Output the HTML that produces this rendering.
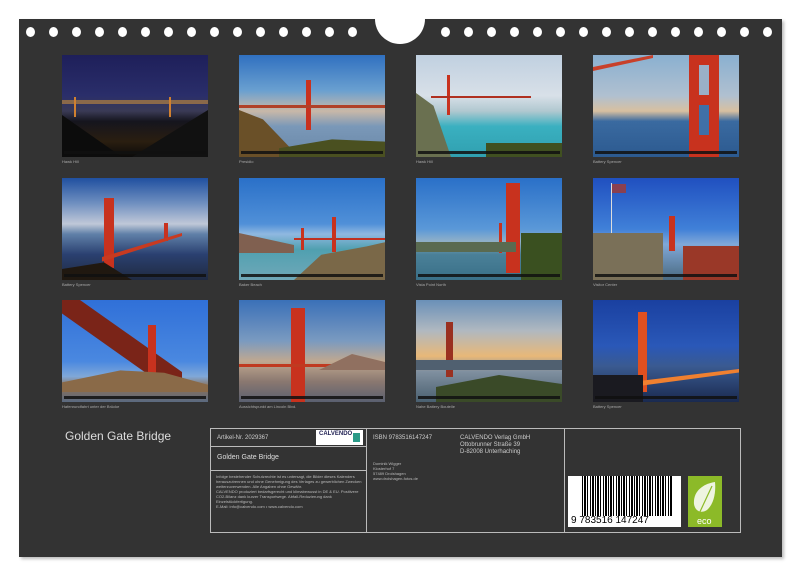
<!DOCTYPE html>
<html><head><meta charset="utf-8"><style>
*{margin:0;padding:0;box-sizing:border-box}
body{width:800px;height:577px;background:#fff;position:relative;overflow:hidden;font-family:"Liberation Sans",sans-serif}
#panel{position:absolute;left:19px;top:19px;width:763px;height:538px;background:#333;box-shadow:2px 2px 3px #bbb}
.hole{position:absolute;top:27px;width:9px;height:10px;border-radius:50%;background:#fff}
#notch{position:absolute;left:375px;top:14px;width:50px;height:30px;border-radius:0 0 25px 25px;background:#fff}
.ph{position:absolute;width:146px;height:102px;overflow:hidden}
.ph .strip{position:absolute;left:2px;right:2px;bottom:3px;height:3px;background:#111;opacity:.85}
.ph div{position:absolute}
.cap{position:absolute;font-size:4px;color:#aaa}
.t{background:#c8321e}
.box{position:absolute;border:1px solid #bbb}
.sm{font-size:4px;color:#bbb;line-height:5px;position:absolute}
</style></head><body>
<div id="panel"></div>
<div id="notch"></div>
<div class="hole" style="left:26px"></div><div class="hole" style="left:49px"></div><div class="hole" style="left:72px"></div><div class="hole" style="left:95px"></div><div class="hole" style="left:118px"></div><div class="hole" style="left:141px"></div><div class="hole" style="left:164px"></div><div class="hole" style="left:187px"></div><div class="hole" style="left:210px"></div><div class="hole" style="left:233px"></div><div class="hole" style="left:256px"></div><div class="hole" style="left:279px"></div><div class="hole" style="left:302px"></div><div class="hole" style="left:325px"></div><div class="hole" style="left:348px"></div>
<div class="hole" style="left:441px"></div><div class="hole" style="left:464px"></div><div class="hole" style="left:487px"></div><div class="hole" style="left:510px"></div><div class="hole" style="left:533px"></div><div class="hole" style="left:556px"></div><div class="hole" style="left:579px"></div><div class="hole" style="left:602px"></div><div class="hole" style="left:625px"></div><div class="hole" style="left:648px"></div><div class="hole" style="left:671px"></div><div class="hole" style="left:694px"></div><div class="hole" style="left:717px"></div><div class="hole" style="left:740px"></div><div class="hole" style="left:763px"></div>

<div class="ph" style="left:62px;top:55px;background:linear-gradient(#1e1f5a 0%,#2a2e6a 40%,#3a3a55 55%,#15151e 65%,#2a1e10 85%,#0a0a0a 100%)">
<div style="left:0;top:45px;width:146px;height:4px;background:#b08040;opacity:.7"></div>
<div style="left:12px;top:42px;width:2px;height:20px;background:#d08030"></div>
<div style="left:107px;top:42px;width:2px;height:20px;background:#d08030"></div>
<div style="left:0;top:60px;width:60px;height:42px;background:#0c0c0c;clip-path:polygon(0 0,100% 100%,0 100%)"></div>
<div style="left:70px;top:55px;width:76px;height:47px;background:#111;clip-path:polygon(100% 0,100% 100%,0 100%)"></div>
<div class="strip"></div></div>
<div class="cap" style="left:62px;top:159px">Hawk Hill</div>

<div class="ph" style="left:239px;top:55px;background:linear-gradient(#3070c0 0%,#6aa0d0 35%,#c8b8a8 55%,#7a98b8 70%,#6a88a8 100%)">
<div class="t" style="left:67px;top:25px;width:5px;height:50px"></div>
<div style="left:0;top:50px;width:146px;height:3px;background:#b04028"></div>
<div style="left:0;top:55px;width:60px;height:47px;background:#6a5028;clip-path:polygon(0 0,40% 20%,100% 100%,0 100%)"></div>
<div style="left:40px;top:80px;width:106px;height:22px;background:#4a5020;clip-path:polygon(0 60%,50% 20%,100% 30%,100% 100%,0 100%)"></div>
<div class="strip"></div></div>
<div class="cap" style="left:239px;top:159px">Presidio</div>

<div class="ph" style="left:416px;top:55px;background:linear-gradient(#c0d0e0 0%,#d8e0e8 40%,#b0c8d0 55%,#3ab0c0 70%,#30a0b0 100%)">
<div class="t" style="left:31px;top:20px;width:3px;height:40px"></div>
<div style="left:15px;top:41px;width:100px;height:2px;background:#b03020"></div>
<div style="left:0;top:38px;width:35px;height:64px;background:#6a7050;clip-path:polygon(0 0,50% 20%,100% 100%,0 100%)"></div>
<div style="left:70px;top:88px;width:76px;height:14px;background:#405020"></div>
<div class="strip"></div></div>
<div class="cap" style="left:416px;top:159px">Hawk Hill</div>

<div class="ph" style="left:593px;top:55px;background:linear-gradient(#8ab0d0 0%,#b0c0d0 40%,#d8c0a0 55%,#3a6aa0 65%,#2c5a90 100%)">
<div class="t" style="left:96px;top:0;width:30px;height:102px"></div>
<div style="left:106px;top:10px;width:10px;height:30px;background:#9ab0c8"></div>
<div style="left:106px;top:50px;width:10px;height:30px;background:#4070a8"></div>
<div style="left:0;top:0;width:60px;height:20px;background:#c8402a;clip-path:polygon(0 60%,100% 0,100% 15%,0 80%)"></div>
<div class="strip"></div></div>
<div class="cap" style="left:593px;top:159px">Battery Spencer</div>

<div class="ph" style="left:62px;top:178px;background:linear-gradient(#2050a0 0%,#7090c0 25%,#c0c8d8 45%,#6080a8 55%,#2a4070 75%,#202a40 100%)">
<div class="t" style="left:42px;top:20px;width:10px;height:70px"></div>
<div class="t" style="left:102px;top:45px;width:4px;height:18px"></div>
<div style="left:40px;top:55px;width:80px;height:30px;background:#c83a20;clip-path:polygon(0 80%,100% 0,100% 10%,0 95%)"></div>
<div style="left:0;top:80px;width:70px;height:22px;background:#201810;clip-path:polygon(0 50%,60% 20%,100% 100%,0 100%)"></div>
<div class="strip"></div></div>
<div class="cap" style="left:62px;top:282px">Battery Spencer</div>

<div class="ph" style="left:239px;top:178px;background:linear-gradient(#2a70c8 0%,#5090d8 45%,#90b8e0 55%,#50a0b0 70%,#70a8b8 100%)">
<div class="t" style="left:93px;top:39px;width:4px;height:35px"></div>
<div class="t" style="left:62px;top:50px;width:3px;height:22px"></div>
<div style="left:55px;top:60px;width:91px;height:2px;background:#c03020"></div>
<div style="left:0;top:55px;width:55px;height:20px;background:#806050;clip-path:polygon(0 0,100% 60%,100% 100%,0 100%)"></div>
<div style="left:55px;top:60px;width:91px;height:42px;background:#7a6848;clip-path:polygon(0 100%,30% 40%,80% 20%,100% 10%,100% 100%)"></div>
<div class="strip"></div></div>
<div class="cap" style="left:239px;top:282px">Baker Beach</div>

<div class="ph" style="left:416px;top:178px;background:linear-gradient(#2a70c8 0%,#5a98d8 50%,#90b0c8 62%,#4a8098 75%,#3a7088 100%)">
<div class="t" style="left:90px;top:5px;width:14px;height:90px"></div>
<div class="t" style="left:83px;top:45px;width:3px;height:30px"></div>
<div style="left:0;top:64px;width:100px;height:10px;background:#5a6a50"></div>
<div style="left:105px;top:55px;width:41px;height:47px;background:#3a5020"></div>
<div class="strip"></div></div>
<div class="cap" style="left:416px;top:282px">Vista Point North</div>

<div class="ph" style="left:593px;top:178px;background:linear-gradient(#2050c0 0%,#4080d8 50%,#80a8d8 65%,#4a6a80 100%)">
<div style="left:18px;top:5px;width:1px;height:55px;background:#ddd"></div>
<div style="left:19px;top:6px;width:14px;height:9px;background:#8a4050"></div>
<div class="t" style="left:76px;top:38px;width:6px;height:35px"></div>
<div style="left:0;top:55px;width:70px;height:47px;background:#7a7058"></div>
<div style="left:90px;top:68px;width:56px;height:34px;background:#9a3828"></div>
<div class="strip"></div></div>
<div class="cap" style="left:593px;top:282px">Visitor Center</div>

<div class="ph" style="left:62px;top:300px;background:linear-gradient(#3070d8 0%,#4a88e0 60%,#80a8d8 75%,#8a7058 85%,#5a6a80 100%)">
<div style="left:0;top:0;width:120px;height:90px;background:#7a2418;clip-path:polygon(0 0,15% 0,100% 80%,100% 100%,90% 100%,0 15%)"></div>
<div class="t" style="left:86px;top:25px;width:8px;height:65px"></div>
<div style="left:0;top:68px;width:146px;height:24px;background:#8a6a48;clip-path:polygon(0 60%,40% 10%,70% 20%,100% 70%,100% 100%,0 100%)"></div>
<div class="strip"></div></div>
<div class="cap" style="left:62px;top:404px">Hafenrundfahrt unter der Brücke</div>

<div class="ph" style="left:239px;top:300px;background:linear-gradient(#3a70b8 0%,#7a9ac0 40%,#c0a890 60%,#8a7870 80%,#5a6070 100%)">
<div class="t" style="left:52px;top:8px;width:14px;height:94px"></div>
<div style="left:0;top:64px;width:146px;height:3px;background:#c03a20"></div>
<div style="left:80px;top:50px;width:66px;height:20px;background:#907060;clip-path:polygon(0 100%,50% 20%,100% 60%,100% 100%)"></div>
<div class="strip"></div></div>
<div class="cap" style="left:239px;top:404px">Aussichtspunkt am Lincoln Blvd.</div>

<div class="ph" style="left:416px;top:300px;background:linear-gradient(#6a90b8 0%,#b0b8c0 30%,#e8b878 55%,#8090a0 70%,#4a6070 100%)">
<div class="t" style="left:30px;top:22px;width:7px;height:55px;background:#9a3020"></div>
<div style="left:0;top:60px;width:146px;height:10px;background:#506070"></div>
<div style="left:20px;top:72px;width:126px;height:30px;background:#3a4a28;clip-path:polygon(0 50%,50% 10%,100% 40%,100% 100%,0 100%)"></div>
<div class="strip"></div></div>
<div class="cap" style="left:416px;top:404px">Nahe Battery Boutelle</div>

<div class="ph" style="left:593px;top:300px;background:linear-gradient(#1a40a0 0%,#2a58b8 45%,#3a5a90 65%,#1a2a50 100%)">
<div style="left:45px;top:12px;width:9px;height:80px;background:#e05020"></div>
<div style="left:0;top:55px;width:146px;height:35px;background:#f08030;clip-path:polygon(20% 80%,100% 40%,100% 50%,20% 95%)"></div>
<div style="left:0;top:75px;width:50px;height:27px;background:#1a1a20"></div>
<div class="strip"></div></div>
<div class="cap" style="left:593px;top:404px">Battery Spencer</div>

<div style="position:absolute;left:65px;top:429px;font-size:12px;color:#ddd">Golden Gate Bridge</div>

<div class="box" style="left:210px;top:428px;width:531px;height:105px"></div>
<div class="box" style="left:210px;top:428px;width:157px;height:19px"></div>
<div class="box" style="left:210px;top:446px;width:157px;height:25px"></div>
<div class="box" style="left:366px;top:428px;width:199px;height:105px"></div>
<div style="position:absolute;left:217px;top:435px;font-size:6px;color:#ccc">Artikel-Nr. 2029367</div>
<div style="position:absolute;left:316px;top:430px;width:47px;height:15px;background:#fff;font-size:6px;color:#225;padding:1px 0 0 3px;font-weight:bold">CALVENDO<div style="position:absolute;right:3px;top:3px;width:7px;height:9px;background:#2a9a88"></div></div>
<div style="position:absolute;left:217px;top:454px;font-size:7px;color:#ddd">Golden Gate Bridge</div>
<div class="sm" style="left:216px;top:474px;width:148px">Infolge bestehender Schutzrechte ist es untersagt, die Bilder dieses Kalenders herauszutrennen und ohne Genehmigung des Verlages zu gewerblichen Zwecken weiterzuverwenden. Alle Angaben ohne Gewähr.<br>CALVENDO produziert bedarfsgerecht und klimabewusst in DE &amp; EU. Positivere CO2-Bilanz dank kurzer Transportwege. Abfall-Reduzierung dank Einzelstückfertigung.<br>E-Mail: info@calvendo.com • www.calvendo.com</div>
<div style="position:absolute;left:373px;top:435px;font-size:6px;color:#ccc">ISBN 9783516147247</div>
<div style="position:absolute;left:460px;top:435px;font-size:6px;color:#ccc;line-height:7px">CALVENDO Verlag GmbH<br>Ottobrunner Straße 39<br>D-82008 Unterhaching</div>
<div class="sm" style="left:373px;top:461px">Dominik Wigger<br>Klosterhof 7<br>57489 Drolshagen<br>www.drolshagen-fotos.de</div>
<div style="position:absolute;left:568px;top:476px;width:113px;height:51px;background:#fff;overflow:hidden">
<div style="position:absolute;left:14px;top:0;width:90px;height:40px;background:repeating-linear-gradient(90deg,#000 0 1px,#fff 1px 2px,#000 2px 4px,#fff 4px 5px,#000 5px 6px,#fff 6px 8px,#000 8px 9px,#fff 9px 10px,#000 10px 12px,#fff 12px 13px)"></div>
<div style="position:absolute;left:3px;top:39px;font-size:10px;color:#000;letter-spacing:0">9 783516 147247</div></div>
<div style="position:absolute;left:688px;top:476px;width:34px;height:51px;background:#8cba28">
<svg width="34" height="51" viewBox="0 0 34 51"><path d="M27 6 C14 8 5 16 6 28 C7 35 13 38 19 34 C26 28 28 16 27 6Z" fill="#eef4e0"/><path d="M24 10 L10 40" stroke="#8cba28" stroke-width="1.2" fill="none"/><text x="9" y="48" font-family="Liberation Sans,sans-serif" font-size="9" fill="#fff">eco</text></svg></div>
</body></html>
